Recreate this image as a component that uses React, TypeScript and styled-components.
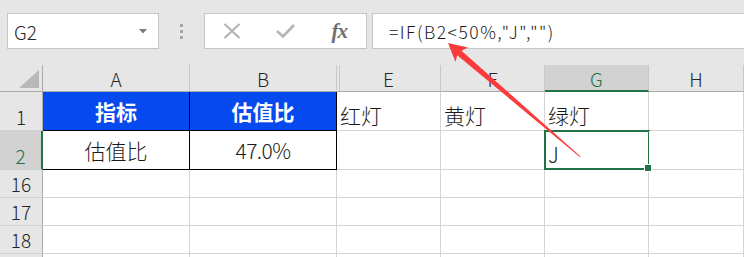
import React from 'react'
import styled, { createGlobalStyle, css } from 'styled-components'

const GlobalStyle = createGlobalStyle`
  html, body {
    margin: 0;
    padding: 0;
    background: #fff;
    overflow: hidden;
  }
  * {
    box-sizing: border-box;
  }
`

const FONT = `"Noto Sans CJK SC", "Noto Sans", sans-serif`
const GREEN = '#217346'

const Page = styled.div`
  position: relative;
  width: 744px;
  height: 257px;
  overflow: hidden;
  font-family: ${FONT};
  color: #1a1a1a;
`

const Toolbar = styled.div`
  display: flex;
  align-items: flex-start;
  height: 65px;
  padding-top: 13px;
  background: #e6e6e6;
`

const NameBox = styled.div`
  display: flex;
  align-items: center;
  justify-content: space-between;
  width: 152px;
  height: 36px;
  margin-left: 7px;
  padding: 0 11px 0 6px;
  background: #fff;
  border: 1px solid #c6c6c6;
  font-size: 19px;
  font-weight: 300;
  color: #262626;
`

const Grip = styled.div`
  display: flex;
  flex-direction: column;
  align-items: center;
  justify-content: center;
  gap: 3px;
  width: 45px;
  height: 36px;
`

const Dot = styled.span`
  width: 3px;
  height: 3px;
  background: #a6a6a6;
`

const FxButtons = styled.div`
  display: flex;
  align-items: center;
  width: 163px;
  height: 36px;
  background: #fff;
  border: 1px solid #c6c6c6;
`

const FxBtn = styled.div`
  display: flex;
  align-items: center;
  justify-content: center;
  width: 54px;
  height: 100%;
`

const FxLabel = styled.span`
  font-family: "Liberation Serif", serif;
  font-style: italic;
  font-weight: bold;
  font-size: 21px;
  color: #6f6f6f;
  letter-spacing: -1px;
`

const FormulaInput = styled.div`
  flex: 1;
  display: flex;
  align-items: center;
  height: 36px;
  margin-left: 5px;
  padding-left: 16px;
  background: #fff;
  border: 1px solid #c6c6c6;
  border-right: none;
  font-size: 17.5px;
  font-weight: 300;
  letter-spacing: 1.5px;
  color: #1a1a1a;
`

const Sheet = styled.div`
  display: grid;
  grid-template-columns: 43px 147px 147px 104px 104px 104px 1fr;
  grid-template-rows: 27px 39px 39px 28px 28px 28px 28px;
`

const headBase = css`
  display: flex;
  justify-content: center;
  background: #e6e6e6;
  font-size: 19px;
  font-weight: 300;
  color: #262626;
  border-right: 1px solid #c8c8c8;
  border-bottom: 1px solid #ababab;
`

const Corner = styled.div`
  ${headBase};
  position: relative;
  border-right: 1px solid #ababab;
`

const SelectAll = styled.span`
  position: absolute;
  right: 3px;
  bottom: 3px;
  width: 20px;
  height: 18px;
  background: #b8b8b8;
  clip-path: polygon(100% 0, 100% 100%, 0 100%);
`

const ColHead = styled.div<{ $active?: boolean; $split?: boolean }>`
  ${headBase};
  align-items: center;
  padding-top: 1px;
  ${p => p.$split && css`box-shadow: inset 2px 0 0 #e6e6e6, inset 3px 0 0 #c8c8c8;`}
  ${p => p.$active && css`
    background: #d2d2d2;
    color: ${GREEN};
    border-bottom: 2px solid ${GREEN};
  `}
`

const RowHead = styled.div<{ $active?: boolean }>`
  ${headBase};
  align-items: flex-end;
  padding-bottom: 1px;
  line-height: 1.2;
  border-right: 1px solid #ababab;
  border-bottom: 1px solid #d0d0d0;
  ${p => p.$active && css`
    background: #d2d2d2;
    color: ${GREEN};
    border-right: 2px solid ${GREEN};
  `}
`

const Cell = styled.div<{ $fill?: string; $boxed?: boolean; $center?: boolean; $bold?: boolean; $selected?: boolean }>`
  position: relative;
  display: flex;
  align-items: ${p => (p.$center ? 'center' : 'flex-end')};
  justify-content: ${p => (p.$center ? 'center' : 'flex-start')};
  padding: ${p => (p.$center ? '2px 0 0' : '0 0 1px 3px')};
  background: ${p => p.$fill || '#fff'};
  color: ${p => (p.$fill ? '#fff' : '#1a1a1a')};
  font-size: 21px;
  font-weight: ${p => (p.$bold ? 700 : 300)};
  line-height: 1.3;
  border-right: 1px solid ${p => (p.$boxed ? '#000' : '#d4d4d4')};
  border-bottom: 1px solid ${p => (p.$boxed ? '#000' : '#d4d4d4')};
  white-space: nowrap;
  ${p => p.$selected && css`
    &::after {
      content: '';
      position: absolute;
      left: -1px;
      top: -1px;
      right: -2px;
      bottom: -1px;
      border: 2px solid ${GREEN};
    }
    &::before {
      content: '';
      position: absolute;
      right: -4px;
      bottom: -3px;
      width: 6px;
      height: 6px;
      background: ${GREEN};
      border: 1px solid #fff;
      z-index: 1;
    }
  `}
`

const Num = styled.span`
  letter-spacing: -0.6px;
`

const Arrow = styled.svg`
  position: absolute;
  left: 0;
  top: 0;
  pointer-events: none;
`

const columns = ['A', 'B', 'E', 'F', 'G', 'H']
const tailRows = ['16', '17', '18', '']

function App() {
  return (
    <Page>
      <GlobalStyle />
      <Toolbar>
        <NameBox>
          <span>G2</span>
          <svg width="8" height="5" viewBox="0 0 8 5">
            <path d="M0 0 L8 0 L4 4.5 Z" fill="#7a7a7a" />
          </svg>
        </NameBox>
        <Grip>
          <Dot />
          <Dot />
          <Dot />
        </Grip>
        <FxButtons>
          <FxBtn>
            <svg width="18" height="16" viewBox="0 0 18 16">
              <path d="M1.5 1 L16.5 15 M16.5 1 L1.5 15" stroke="#b4b4b4" strokeWidth="2.2" />
            </svg>
          </FxBtn>
          <FxBtn>
            <svg width="19" height="14" viewBox="0 0 19 14">
              <path d="M1 7 L7 12.5 L18 1" stroke="#b4b4b4" strokeWidth="2.6" fill="none" />
            </svg>
          </FxBtn>
          <FxBtn>
            <FxLabel>fx</FxLabel>
          </FxBtn>
        </FxButtons>
        <FormulaInput>=IF(B2&lt;50%,"J","")</FormulaInput>
      </Toolbar>

      <Sheet>
        <Corner>
          <SelectAll />
        </Corner>
        {columns.map(c => (
          <ColHead key={c} $active={c === 'G'} $split={c === 'E'}>
            {c}
          </ColHead>
        ))}

        <RowHead>1</RowHead>
        <Cell $fill="#0649ee" $boxed $center $bold>指标</Cell>
        <Cell $fill="#0649ee" $boxed $center $bold>估值比</Cell>
        <Cell>红灯</Cell>
        <Cell>黄灯</Cell>
        <Cell>绿灯</Cell>
        <Cell />

        <RowHead $active>2</RowHead>
        <Cell $boxed $center>估值比</Cell>
        <Cell $boxed $center>
          <Num>47.0%</Num>
        </Cell>
        <Cell />
        <Cell />
        <Cell $selected>J</Cell>
        <Cell />

        {tailRows.map((r, i) => (
          <React.Fragment key={i}>
            <RowHead>{r}</RowHead>
            {columns.map(c => (
              <Cell key={c} />
            ))}
          </React.Fragment>
        ))}
      </Sheet>

      <Arrow width="744" height="257" viewBox="0 0 744 257">
        <polygon
          points="448,43 468,47.5 461.5,50.8 580.6,156.4 579.8,157 457.2,55.2 455.5,62"
          fill="#fb3b3b"
        />
      </Arrow>
    </Page>
  )
}

export default App
